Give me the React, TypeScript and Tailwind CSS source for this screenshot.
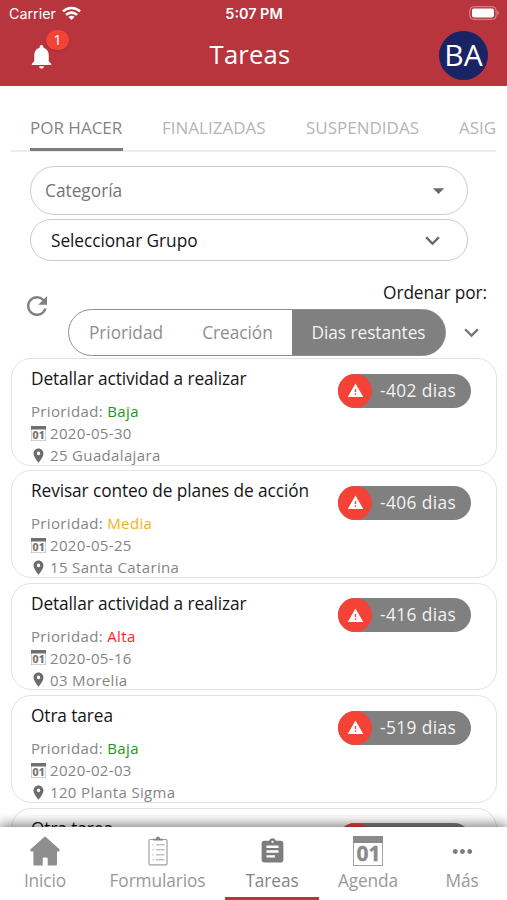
import clsx from 'clsx';
import {
  MdArrowDropDown,
  MdAssignment,
  MdKeyboardArrowDown,
  MdMoreHoriz,
  MdNotifications,
  MdPlace,
  MdRefresh,
  MdWarning,
} from 'react-icons/md';

type Priority = 'Baja' | 'Media' | 'Alta';

interface Task {
  title: string;
  priority: Priority;
  date: string;
  place: string;
  days: number;
}

const TASKS: Task[] = [
  { title: 'Detallar actividad a realizar', priority: 'Baja', date: '2020-05-30', place: '25 Guadalajara', days: -402 },
  { title: 'Revisar conteo de planes de acción', priority: 'Media', date: '2020-05-25', place: '15 Santa Catarina', days: -406 },
  { title: 'Detallar actividad a realizar', priority: 'Alta', date: '2020-05-16', place: '03 Morelia', days: -416 },
  { title: 'Otra tarea', priority: 'Baja', date: '2020-02-03', place: '120 Planta Sigma', days: -519 },
];

const PRIORITY_COLOR: Record<Priority, string> = {
  Baja: 'text-[#189a18]',
  Media: 'text-[#f7ae1e]',
  Alta: 'text-[#fa1e1e]',
};

function CalendarIcon({ className }: { className?: string }) {
  return (
    <svg viewBox="0 0 30 30" className={className}>
      <rect x="0.5" y="0.5" width="29" height="29" fill="#fff" stroke="#a3a3a3" />
      <rect width="30" height="7" fill="currentColor" />
      <text
        x="15.5"
        y="25"
        textAnchor="middle"
        fontSize="21"
        fontWeight="700"
        fill="currentColor"
        stroke="currentColor"
        strokeWidth="0.4"
        fontFamily="'Open Sans', sans-serif"
      >
        01
      </text>
    </svg>
  );
}

function HomeIcon() {
  return (
    <svg viewBox="0 0 30 30" className="size-[30px]" fill="#8e8e8e">
      <path d="M14.2.9q.8-.8 1.6 0L29.4 13.2q1 1.6-.6 2.2H27v12.8q0 1.3-1.3 1.3h-8V22.6q0-1.2-1.2-1.2h-2.6q-1.2 0-1.2 1.2v6.9H4.7q-1.3 0-1.3-1.3V15.4H1.2q-1.6-.6-.6-2.2z" />
    </svg>
  );
}

function FormIcon() {
  return (
    <svg viewBox="0 0 20 30" className="h-[30px] w-5" fill="none">
      <rect x="1" y="3.5" width="18" height="25.3" rx="1" stroke="#a0a0a0" strokeWidth="1.2" />
      <path d="M5 4.5V2.8h3c0-3.2 4-3.2 4 0h3v1.7z" fill="#858585" />
      <path d="M8 8.8h8.5M8 13.8h8.5M8 18.8h8.5M8 23.8h8.5" stroke="#a3a3a3" />
      <path d="M4 8.5l1 .8 1-1.5M4 13.5l1 .8 1-1.5M4 18.5l1 .8 1-1.5M4 23.5l1 .8 1-1.5" stroke="#c4c4c4" strokeWidth="0.8" />
    </svg>
  );
}

function StatusBar() {
  return (
    <div className="grid h-[27px] grid-cols-3 items-center pr-[7px] pl-[9px] font-['Inter',sans-serif]">
      <div className="flex items-center gap-[6px]">
        <span className="text-[14.3px]">Carrier</span>
        <svg viewBox="0 0 19 14" className="-mt-px h-[14px] w-[19px]" fill="none" stroke="#fff" strokeWidth="2.6">
          <path d="M1 5.4a12.2 12.2 0 0 1 17 0" />
          <path d="M4 8.9a7.8 7.8 0 0 1 11 0" />
          <path d="M9.5 13.9 6.5 10.9a4.2 4.2 0 0 1 6 0z" fill="#fff" stroke="none" />
        </svg>
      </div>
      <span className="pr-px text-center text-[14.4px] font-semibold">5:07 PM</span>
      <svg viewBox="0 0 31 14" className="-mt-px h-[14px] w-[31px] justify-self-end">
        <rect x="0.9" y="0.7" width="26.2" height="12.6" rx="3.5" fill="none" stroke="#fff" strokeOpacity="0.45" />
        <rect x="3" y="2.6" width="22" height="8.8" rx="1.8" fill="#fff" />
        <path d="M28.5 4.8a3 3 0 0 1 0 4.4z" fill="#fff" fillOpacity="0.6" />
      </svg>
    </div>
  );
}

function Header() {
  return (
    <header className="h-[86px] shrink-0 bg-[#b9353e] text-white">
      <StatusBar />
      <div className="grid h-[58px] grid-cols-3 items-center pr-[19px] pl-[27px]">
        <div className="relative w-fit">
          <MdNotifications className="size-[29px]" />
          <span className="absolute -top-[12px] left-[19px] flex h-[20px] w-[23px] items-center justify-center rounded-full bg-[#f44336] text-[15px] leading-none shadow-sm">
            1
          </span>
        </div>
        <h1 className="-mt-[3px] pr-[15px] text-center text-[25.6px] leading-none tracking-[0.2px]">Tareas</h1>
        <div className="-mt-px flex size-[49px] items-center justify-center justify-self-end rounded-full bg-[#1a2363] text-[30px] leading-none">
          <span className="-mt-px">BA</span>
        </div>
      </div>
    </header>
  );
}

function Tabs() {
  return (
    <nav className="mx-[11px] mt-[20px] flex h-[46px] shrink-0 overflow-hidden border-b-2 border-[#ededed] pl-[19px] text-[17px] whitespace-nowrap text-[#b5b5b5]">
      <span className="w-[93px] shrink-0 pt-[9px] text-[#858585]">POR HACER</span>
      <span className="ml-[39px] w-[105px] shrink-0 pt-[9px]">FINALIZADAS</span>
      <span className="ml-[39px] w-[115px] shrink-0 pt-[9px]">SUSPENDIDAS</span>
      <span className="ml-[38px] shrink-0 pt-[9px]">ASIG</span>
    </nav>
  );
}

function DaysPill({ days }: { days: number }) {
  return (
    <div className="mt-[14.5px] flex h-[34px] w-[133px] shrink-0 items-center rounded-full bg-[#808080] text-[17.3px] tracking-[0.4px] whitespace-nowrap text-[#f3f3f3]">
      <span className="mr-[8px] flex size-[34px] items-center justify-center rounded-full bg-[#f44336]">
        <MdWarning className="size-[17px] text-white" />
      </span>
      {days} dias
    </div>
  );
}

function TaskCard({ task }: { task: Task }) {
  return (
    <article className="flex h-[107.5px] shrink-0 justify-between overflow-hidden rounded-[20px] border-[1.5px] border-[#e2e2e2] bg-white pr-[25px] pl-[19px]">
      <div className="text-[15px] tracking-[0.35px] text-[#858585]">
        <h2 className="mt-[7px] text-[17.3px] leading-[26px] tracking-[-0.1px] text-[#161616]">{task.title}</h2>
        <p className="mt-[8px] leading-[22px]">
          Prioridad: <span className={PRIORITY_COLOR[task.priority]}>{task.priority}</span>
        </p>
        <p className="flex items-center gap-[4px] leading-[22px]">
          <CalendarIcon className="size-[15px] text-[#6f6f6f]" />
          {task.date}
        </p>
        <p className="flex items-center gap-[3px] leading-[22px]">
          <MdPlace className="-ml-px size-[17px] text-[#6c6c6c]" />
          {task.place}
        </p>
      </div>
      <DaysPill days={task.days} />
    </article>
  );
}

const NAV = [
  { label: 'Inicio', width: 'w-[90px]', icon: <HomeIcon /> },
  { label: 'Formularios', width: 'w-[135px]', icon: <FormIcon /> },
  { label: 'Tareas', width: 'w-[94px]', icon: <MdAssignment className="size-[29px] text-[#7d7d7d]" />, active: true },
  { label: 'Agenda', width: 'w-[98px]', icon: <CalendarIcon className="size-[30px] text-[#8a8a8a]" /> },
  { label: 'Más', width: 'w-[90px]', icon: <MdMoreHoriz className="size-[29px] text-[#7d7d7d]" /> },
];

function BottomNav() {
  return (
    <nav className="relative flex h-[73px] shrink-0 bg-white text-[17.3px] tracking-[-0.1px] text-[#999] shadow-[0_-2px_12px_rgba(0,0,0,0.55)]">
      {NAV.map(item => (
        <div
          key={item.label}
          className={clsx(
            'flex shrink-0 flex-col items-center border-b-[3px] pt-[9px]',
            item.width,
            item.active ? 'border-[#b9353e] text-[#858585]' : 'border-transparent',
          )}
        >
          <span className="flex h-[30px] items-center">{item.icon}</span>
          <span className="mt-[3px] leading-[24px]">{item.label}</span>
        </div>
      ))}
    </nav>
  );
}

export default function App() {
  return (
    <div className="flex h-[900px] w-[507px] flex-col overflow-hidden bg-white font-['Open_Sans',sans-serif]">
      <Header />
      <Tabs />
      <div className="relative -mt-[4px] ml-[30px] h-[3px] w-[93px] shrink-0 bg-[#7d7d7d]" />

      <div className="mt-[15px] ml-[30px] flex w-[438px] shrink-0 flex-col gap-[4px]">
        <div className="flex h-[49px] items-center justify-between rounded-full border-[1.5px] border-[#cbcbcb] pr-[15px] pl-[14px] text-[17.3px] text-[#757575]">
          Categoría
          <MdArrowDropDown className="size-[27px] text-[#6b6b6b]" />
        </div>
        <div className="flex h-[42px] items-center justify-between rounded-full border-[1.5px] border-[#cbcbcb] pt-px pr-[20px] pl-[20px] text-[17.3px] tracking-[-0.06px] text-[#161616]">
          Seleccionar Grupo
          <MdKeyboardArrowDown className="size-[29px] text-[#666]" />
        </div>
      </div>

      <section className="flex h-[97px] shrink-0 pl-[22px]">
        <MdRefresh className="mt-[30px] size-[30px] shrink-0 text-[#808080]" />
        <div className="ml-[16px] w-[419px]">
          <p className="mt-[19px] text-right text-[17.3px] leading-[26px] tracking-[-0.1px] text-[#161616]">Ordenar por:</p>
          <div className="mt-[3px] flex items-center">
            <div className="flex h-[47px] w-[378px] shrink-0 overflow-hidden rounded-full border-[1.5px] border-[#8f8f8f] bg-[linear-gradient(to_right,#fff_60%,#808080_60%)] text-[17.3px] tracking-[-0.05px] text-[#8f8f8f]">
              <span className="flex w-[114px] items-center justify-center">Prioridad</span>
              <span className="flex w-[109px] items-center justify-center">Creación</span>
              <span className="flex grow items-center justify-center bg-[#808080] text-[#f3f3f3]">Dias restantes</span>
            </div>
            <MdKeyboardArrowDown className="ml-[11px] size-[29px] shrink-0 text-[#757575]" />
          </div>
        </div>
      </section>

      <main className="mr-[10px] ml-[11px] flex min-h-0 grow flex-col gap-[4.9px] overflow-hidden">
        {TASKS.map(task => (
          <TaskCard key={task.title + task.date} task={task} />
        ))}
        <article className="flex h-[107.5px] shrink-0 justify-between rounded-[20px] border-[1.5px] border-[#e2e2e2] pr-[25px] pl-[19px]">
          <h2 className="mt-[7px] text-[17.3px] leading-[26px] tracking-[-0.1px] text-[#161616]">Otra tarea</h2>
          <div className="mt-[14.5px] flex h-[34px] w-[133px] rounded-full bg-[#808080]">
            <span className="size-[34px] rounded-full bg-[#f44336]" />
          </div>
        </article>
      </main>
      <BottomNav />
    </div>
  );
}
